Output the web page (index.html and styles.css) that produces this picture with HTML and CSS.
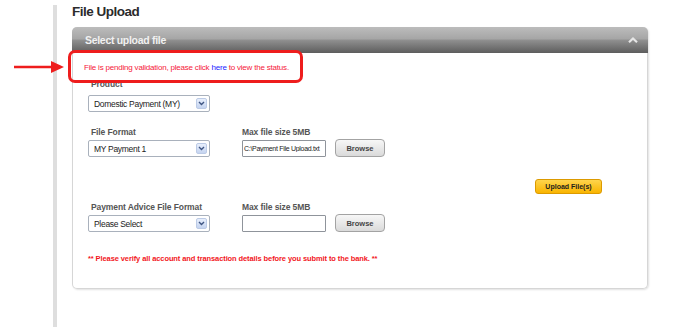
FILE: index.html
```html
<!DOCTYPE html>
<html>
  <head>
    <title>File Upload</title>
    <link rel="stylesheet" href="styles.css">
  </head>
  <body>
    <div class="page">
      <div class="rail"></div>
      <div class="content">
        <h1 class="title">File Upload</h1>
        <div class="panel">
          <div class="panel-head">
            <span class="panel-title">Select upload file</span>
            <svg class="caret" width="10" height="6" viewBox="0 0 10 6">
              <path d="M1 5.2 L5 1.5 L9 5.2" fill="none" stroke="#e6e6e6" stroke-width="2.2"/>
            </svg>
          </div>
          <div class="panel-body">
            <p class="notice">File is pending validation, please click <a href="#">here</a> to view the status.</p>

            <div class="field field-product">
              <label class="label">Product</label>
              <div class="select">
                <span class="select-text">Domestic Payment (MY)</span>
                <span class="select-arrow">
                  <svg width="7" height="5" viewBox="0 0 7 5"><path d="M1 1 L3.5 3.5 L6 1" fill="none" stroke="#3f5683" stroke-width="1.4"/></svg>
                </span>
              </div>
            </div>

            <div class="row row-format">
              <div class="field">
                <label class="label">File Format</label>
                <div class="select">
                  <span class="select-text">MY Payment 1</span>
                  <span class="select-arrow">
                    <svg width="7" height="5" viewBox="0 0 7 5"><path d="M1 1 L3.5 3.5 L6 1" fill="none" stroke="#3f5683" stroke-width="1.4"/></svg>
                  </span>
                </div>
              </div>
              <div class="field">
                <label class="label label-plain">Max file size 5MB</label>
                <div class="file">
                  <input class="file-input" type="text" value="C:\Payment File Upload.txt">
                  <button class="btn-browse">Browse</button>
                </div>
              </div>
            </div>

            <div class="actions">
              <button class="btn-upload">Upload File(s)</button>
            </div>

            <div class="row row-advice">
              <div class="field">
                <label class="label">Payment Advice File Format</label>
                <div class="select">
                  <span class="select-text">Please Select</span>
                  <span class="select-arrow">
                    <svg width="7" height="5" viewBox="0 0 7 5"><path d="M1 1 L3.5 3.5 L6 1" fill="none" stroke="#3f5683" stroke-width="1.4"/></svg>
                  </span>
                </div>
              </div>
              <div class="field">
                <label class="label label-plain">Max file size 5MB</label>
                <div class="file">
                  <input class="file-input" type="text" value="">
                  <button class="btn-browse">Browse</button>
                </div>
              </div>
            </div>

            <p class="warning">** Please verify all account and transaction details before you submit to the bank. **</p>
          </div>
        </div>
      </div>
    </div>

    <!-- annotation drawn over the screenshot -->
    <div class="callout"></div>
    <svg class="pointer" width="52" height="16" viewBox="0 0 52 16">
      <path d="M0 7 H40" stroke="#ee1d1d" stroke-width="2.6"/>
      <path d="M37 1 L50 7 L37 13 Z" fill="#ee1d1d"/>
    </svg>
  </body>
</html>
```

FILE: styles.css
```css
body {
  margin: 0;
  background: #fff;
  font-family: "Liberation Sans", Arial, sans-serif;
  color: #222;
}

.page {
  display: flex;
}

.rail {
  width: 4px;
  margin-left: 53px;
  margin-top: 5px;
  min-height: calc(100vh - 5px);
  background: #dedede;
}

.content {
  margin-left: 15px;
  padding-top: 2px;
}

.title {
  margin: 0 0 5px;
  font-size: 13.5px;
  line-height: 20px;
  letter-spacing: -0.5px;
  font-weight: bold;
  color: #2b2b2b;
}

.panel {
  width: 576px;
  border: 1px solid #d6d6d6;
  border-top: none;
  border-radius: 5px;
  box-shadow: 1px 1px 2px rgba(0, 0, 0, 0.12);
  box-sizing: border-box;
}

.panel-head {
  height: 26px;
  display: flex;
  align-items: center;
  justify-content: space-between;
  padding: 0 10px 0 13px;
  border-radius: 5px 5px 0 0;
  margin: 0 -1px;
  background: linear-gradient(#bcbcbc, #a6a6a6 45%, #8e8e8e 52%, #5d5d5d);
}

.panel-title {
  font-size: 10.5px;
  letter-spacing: -0.3px;
  font-weight: bold;
  color: #f1f1f1;
}

.caret {
  display: block;
}

.panel-body {
  padding: 0 15px 23px;
}

.notice {
  margin: 9px 0 0 -4px;
  font-size: 8px;
  line-height: 12px;
  letter-spacing: -0.2px;
  color: #f5203a;
}

.notice a {
  color: #1c1cff;
  text-decoration: none;
}

.label {
  display: block;
  padding-left: 3px;
  margin-bottom: 2px;
  font-size: 8.5px;
  line-height: 12px;
  letter-spacing: -0.1px;
  font-weight: bold;
  color: #555;
  white-space: nowrap;
}

.label-plain {
  padding-left: 0;
}

.field-product {
  margin-top: 4px;
}

.field-product .label {
  margin-bottom: 5px;
}

.row {
  display: grid;
  grid-template-columns: 122px auto;
  column-gap: 32px;
}

.row-format {
  margin-top: 14px;
}

.row-advice {
  margin-top: 7px;
}

.select {
  width: 122px;
  height: 17px;
  box-sizing: border-box;
  display: flex;
  align-items: center;
  justify-content: space-between;
  padding: 0 2px 0 5px;
  border: 1px solid #a9b1bc;
  border-radius: 2px;
  background: #fff;
}

.select-text {
  font-size: 8.5px;
  letter-spacing: -0.3px;
  color: #222;
  white-space: nowrap;
}

.select-arrow {
  width: 11px;
  height: 11px;
  box-sizing: border-box;
  display: flex;
  align-items: center;
  justify-content: center;
  border: 1px solid #bccbe6;
  border-radius: 2px;
  background: linear-gradient(#e8effc, #c5d4f0);
}

.file {
  display: flex;
  gap: 9px;
}

.file-input {
  width: 84px;
  height: 17px;
  box-sizing: border-box;
  margin: 0;
  padding: 0 1px;
  border: 1px solid #8f949b;
  border-radius: 1px;
  font-family: inherit;
  font-size: 7px;
  letter-spacing: -0.3px;
  color: #222;
}

.btn-browse {
  width: 50px;
  height: 18px;
  margin: -1px 0 0;
  padding: 0;
  border: 1px solid #a3a3a3;
  border-radius: 4px;
  background: linear-gradient(#f7f7f7, #dadada);
  font-family: inherit;
  font-size: 7.5px;
  font-weight: bold;
  color: #454545;
}

.actions {
  display: flex;
  justify-content: flex-end;
  margin: 22px 30px 0 0;
}

.btn-upload {
  width: 67px;
  height: 15px;
  padding: 0;
  border: 1px solid #dc9a00;
  border-radius: 3px;
  background: linear-gradient(#ffd54d, #f9b400);
  font-family: inherit;
  font-size: 7px;
  font-weight: bold;
  color: #1d1d1d;
}

.warning {
  margin: 21px 0 0;
  font-size: 7.5px;
  line-height: 12px;
  letter-spacing: -0.1px;
  font-weight: bold;
  color: #f2161c;
}

.callout {
  position: absolute;
  left: 68px;
  top: 50px;
  width: 235px;
  height: 33px;
  box-sizing: border-box;
  border: 3px solid #ee1d1d;
  border-radius: 7px;
}

.pointer {
  position: absolute;
  left: 14px;
  top: 60px;
}
```
